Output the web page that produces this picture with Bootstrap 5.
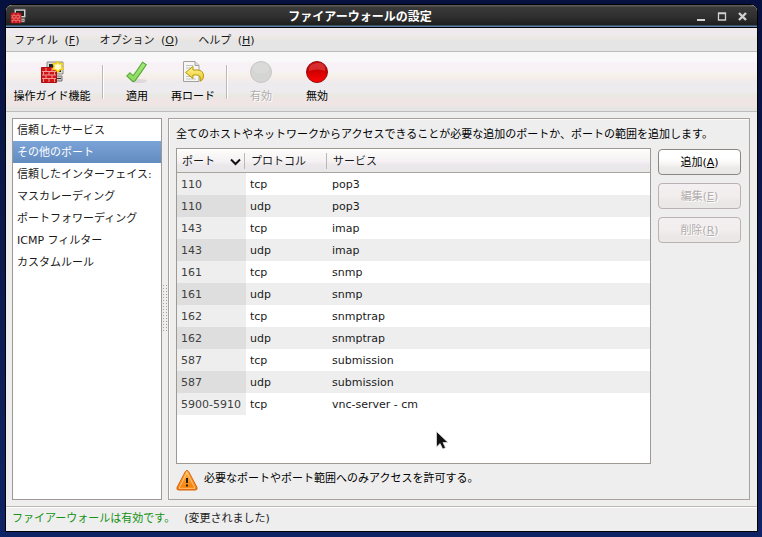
<!DOCTYPE html>
<html lang="ja">
<head>
<meta charset="utf-8">
<meta name="viewport" content="width=device-width, initial-scale=1">
<title>ファイアーウォールの設定</title>
<link href="https://cdn.jsdelivr.net/npm/bootstrap@5.3.0/dist/css/bootstrap.min.css" rel="stylesheet">
<style>
  body {
    --bs-body-font-family: "DejaVu Sans", "Noto Sans CJK JP", sans-serif;
    font-size: 11px; line-height: 16px; color: #1a1a1a;
    padding: 4px 4px 5px 5px;
    background: linear-gradient(#06113f, #0c1a50 50%, #0f2466);
  }
  .fw-window { background: #eee; border: 1px solid #000; border-radius: 7px 7px 0 0; overflow: hidden; }
  .titlebar {
    height: 23px; color: #fff; border-bottom: 1px solid #000;
    background: linear-gradient(#5c5b58 0 1px, #3a3a3a 2px, #2f2f2f 12px, #1d1f1d 20px, #5c82ad 21px);
    padding: 0 8px 0 4px;
  }
  .title-text { font-size: 12px; line-height: 16px; padding-top: 1px; }
  .win-btn { padding: 0; border: 0; background: none; display: flex; }
  .menubar {
    height: 24px; padding: 2px 8px 0; border-bottom: 1px solid #bdb9b9; gap: 20px;
    background: linear-gradient(#eeeaee 0 7px, #ebeae2 9px, #eae5e4 12px, #e5e5e5 14px);
  }
  .menubar a { color: inherit; text-decoration: none; }
  .menubar span { margin: 0 0 0 3px; }
  .toolbar {
    height: 60px; padding: 8px 2px 0; border-bottom: 1px solid #c1bcbc;
    background: linear-gradient(#f9f8f9 0 9px, #f8f2f7 11px 19px, #f5f3ea 22px, #f5ecea 27px, #edebee 31px 40px, #e9e9e2 43px, #eee5e4 47px 53px, #e5e5e5 57px);
  }
  .tool-btn { width: 56px; padding: 0; border: 0; background: none; color: #000; display: flex; flex-direction: column; align-items: center; gap: 5px; white-space: nowrap; }
  .tool-wide { width: 88px; }
  .tool-btn:disabled { color: #b1adad; text-shadow: 1px 1px #fff; }
  .tool-sep { width: 2px; height: 34px; margin: 5px 5px 0; border-left: 1px solid #bdb8b6; border-right: 1px solid #fff; }
  .toolbar .tool-wide + .tool-sep { margin-left: 6px; }
  .workspace { padding: 6px 7px 6px 6px; min-height: 0; }
  .side-list {
    --bs-list-group-border-width: 0;
    width: 150px; background: #fff; border: 1px solid #9f9896; border-radius: 0;
  }
  .side-list .list-group-item { color: #1a1a1a; white-space: nowrap; padding: 4px 4px 2px; }
  .side-list .active { color: #fff; background: linear-gradient(#7ba3d7, #628cc0); }
  .pane-grip { width: 6px; }
  .pane-grip i { width: 5px; height: 48px; background: conic-gradient(from 0deg at 1px 1px, transparent 75%, #a5a2a2 0) 0 0 / 3px 3px; }
  .port-frame { border: 1px solid #aaa09d; box-shadow: inset 1px 1px #fafafa; padding: 8px 8px 8px 7px; gap: 5px; color: #000; min-width: 0; }
  .port-area { min-height: 0; gap: 7px; }
  .port-box { border: 1px solid #9f9994; background: #fff; overflow: hidden; }
  .port-table { --bs-table-bg: transparent; table-layout: fixed; color: #1a1a1a; }
  .port-table > :not(caption) > * > * { padding: 4px 4px 2px; box-shadow: none; border: 0; }
  .port-table .col-port { width: 69px; }
  .port-table .col-proto { width: 82px; }
  .port-table > thead > tr > th {
    height: 24px; padding: 2px 5px 0; font-weight: 400; vertical-align: middle;
    background: linear-gradient(#aaa39f, #aaa39f) bottom / 100% 1px no-repeat, linear-gradient(#bdb7b4, #bdb7b4) right 1px center / 1px 16px no-repeat, linear-gradient(#fff, #faf8f6 5px, #f5f1f5 12px, #ebe8eb 16px, #e7e7e7);
  }
  .port-table > thead > tr > th:last-child { background: linear-gradient(#aaa39f, #aaa39f) bottom / 100% 1px no-repeat, linear-gradient(#fff, #faf8f6 5px, #f5f1f5 12px, #ebe8eb 16px, #e7e7e7); }
  .port-table tbody tr:nth-child(even) { background: #eee; }
  .port-table tbody td:first-child { background: #eee; color: #404040; white-space: nowrap; }
  .port-table tbody tr:nth-child(even) td:first-child { background: #dedede; }
  .action-col { width: 83px; gap: 8px; padding-top: 1px; }
  .gtk-btn {
    --bs-btn-font-size: 11px; --bs-btn-line-height: 16px;
    --bs-btn-color: #000; --bs-btn-border-color: #8c8682; --bs-btn-border-radius: 4px;
    --bs-btn-disabled-color: #b3adad; --bs-btn-disabled-border-color: #bab1b0; --bs-btn-disabled-opacity: 1;
    padding: 5px 0 3px;
    background: linear-gradient(#fff 8px, #faf6f6 13px, #ece9e9 18px, #e9e7e7);
  }
  .gtk-btn:disabled { background: linear-gradient(#f3eff2, #f2eeee 12px, #ebe7e8 18px, #eae7e7); text-shadow: 1px 1px #fff; }
  .port-note { gap: 6px; }
  .port-note div { padding-top: 2px; }
  .statusbar { height: 25px; padding: 0 6px; gap: 9px; border-top: 1px solid #bdb9b2; box-shadow: inset 0 1px #fff; }
  .status-ok { color: #149214; }
  .pointer { left: 436px; top: 431px; pointer-events: none; }
</style>
<script src="https://cdn.jsdelivr.net/npm/bootstrap@5.3.0/dist/js/bootstrap.bundle.min.js"></script>
</head>
<body class="vh-100 d-flex flex-column overflow-hidden">
<svg width="0" height="0" class="position-absolute" aria-hidden="true">
  <defs>
    <symbol id="firewall" viewBox="0 0 24 24">
      <path d="M7 2h16v12H7z" fill="#dcdcd8" stroke="#888"/><path d="M9 4h12v8H9z" fill="#1e2528"/>
      <path d="M16 16h6v5h-6z" fill="#ccc" stroke="#777"/><path d="M17 18.500h4" stroke="#333"/>
      <path d="M1.500 7.500h15v15h-15z" fill="#cf1518" stroke="#b01013"/>
      <path d="M2 11.500h14M2 15h14M2 18.500h14M6 8v3M12 8v3M3.500 12v3M9 12v3M14.500 12v3M6 15v3M12 15v3M3.500 19v3M9 19v3M14.500 19v3" stroke="#f6aaa4" stroke-width=".9"/>
    </symbol>
    <linearGradient id="gold" x2="0" y2="1"><stop stop-color="#fff59a"/><stop offset="1" stop-color="#e8c81c"/></linearGradient>
    <linearGradient id="green" x2="0" y2="1"><stop stop-color="#a4e678"/><stop offset="1" stop-color="#8cdc60"/></linearGradient>
    <linearGradient id="orange" x2="0" y2="1"><stop stop-color="#ffb24a"/><stop offset="1" stop-color="#f57900"/></linearGradient>
    <linearGradient id="red" x2="0" y2="1"><stop stop-color="#c90d0d"/><stop offset=".45" stop-color="#cf0000"/><stop offset="1" stop-color="#ff0505"/></linearGradient>
  </defs>
</svg>

<main class="fw-window flex-grow-1 d-flex flex-column">
  <header class="titlebar d-flex align-items-center flex-shrink-0">
    <svg width="16" height="16" aria-hidden="true"><use href="#firewall"/></svg>
    <h1 class="title-text flex-grow-1 text-center fw-bold m-0">ファイアーウォールの設定</h1>
    <div class="d-flex gap-2">
      <button class="win-btn" aria-label="最小化"><svg width="13" height="13"><path d="M3 10h8" stroke="#d0d0d0" stroke-width="2"/></svg></button>
      <button class="win-btn" aria-label="最大化"><svg width="13" height="13"><path d="M3.500 3h7v7h-7zM3 3.500h8" fill="none" stroke="#d0d0d0" stroke-width="1.300"/></svg></button>
      <button class="win-btn" aria-label="閉じる"><svg width="13" height="13"><path d="M3 3l7 7M10 3l-7 7" stroke="#d0d0d0" stroke-width="2.400"/></svg></button>
    </div>
  </header>

  <nav class="menubar d-flex align-items-center flex-shrink-0">
    <a href="#">ファイル <span>(<u>F</u>)</span></a>
    <a href="#">オプション <span>(<u>O</u>)</span></a>
    <a href="#">ヘルプ <span>(<u>H</u>)</span></a>
  </nav>

  <div class="toolbar d-flex flex-shrink-0 align-items-start" role="toolbar">
    <button class="tool-btn tool-wide">
      <svg width="24" height="24" viewBox="0 0 24 24"><use href="#firewall"/><path d="M17.500 1.500l1.800 2.300 3.200-.3-.9 2.900 1.400 2.700-3.100.5-1.900 2.400-2-2.300-3.100-.4 1.300-2.800-1-2.900 3.100.2z" fill="#fffbd0" stroke="#f0d018" stroke-width="1.600" stroke-linejoin="round"/></svg>
      操作ガイド機能
    </button>
    <div class="tool-sep"></div>
    <button class="tool-btn">
      <svg width="24" height="24" viewBox="0 0 24 24"><ellipse cx="14" cy="21" rx="8" ry="2" fill="#000" opacity=".08"/><path d="M3 14L8.500 19.200Q14.500 11 19.700 3" fill="none" stroke="#5aa83c" stroke-width="5.600" stroke-linejoin="round" stroke-linecap="butt"/><path d="M3.800 14.700L8.500 19Q14.500 11 19.100 3.900" fill="none" stroke="url(#green)" stroke-width="3.400" stroke-linejoin="round"/></svg>
      適用
    </button>
    <button class="tool-btn">
      <svg width="24" height="24" viewBox="0 0 24 24"><path d="M2.500 2q0-.5.500-.5h11l4 4v16h-15.500z" fill="#f6f6f4" stroke="#a2a29d"/><path d="M14 1.500v4h4" fill="#ddd" stroke="#a2a29d"/><path d="M5 5.500h7M5 8h5M5 16.500h4M5 19h10" stroke="#c4c4c0"/><path d="M4.500 12.500l7.500-6v3.500h4q6.500 0 6.500 6 0 3-2.500 5-1 .5-.8-.6.800-5.400-3.700-5.400H12v3.500z" fill="url(#gold)" stroke="#b79606" stroke-linejoin="round"/></svg>
      再ロード
    </button>
    <div class="tool-sep"></div>
    <button class="tool-btn" disabled>
      <svg width="24" height="24" viewBox="0 0 24 24"><circle cx="12" cy="12" r="10.500" fill="#d5d6d3" stroke="#c6c6c4"/><ellipse cx="12" cy="8" rx="8" ry="5.500" fill="#dadbd8"/></svg>
      有効
    </button>
    <button class="tool-btn">
      <svg width="24" height="24" viewBox="0 0 24 24"><circle cx="12" cy="12" r="10.500" fill="url(#red)" stroke="#8d1111"/><path d="M4 11Q3 4 12 3t8 8q-8-3-16 0z" fill="#e86a6a" opacity=".4"/></svg>
      無効
    </button>
  </div>

  <div class="workspace flex-grow-1 d-flex">
    <div class="side-list list-group flex-shrink-0">
      <button class="list-group-item list-group-item-action">信頼したサービス</button>
      <button class="list-group-item list-group-item-action active" aria-current="true">その他のポート</button>
      <button class="list-group-item list-group-item-action">信頼したインターフェイス:</button>
      <button class="list-group-item list-group-item-action">マスカレーディング</button>
      <button class="list-group-item list-group-item-action">ポートフォワーディング</button>
      <button class="list-group-item list-group-item-action">ICMP フィルター</button>
      <button class="list-group-item list-group-item-action">カスタムルール</button>
    </div>
    <div class="pane-grip d-flex align-items-center justify-content-center flex-shrink-0"><i></i></div>
    <section class="port-frame flex-grow-1 d-flex flex-column">
      <div>全てのホストやネットワークからアクセスできることが必要な追加のポートか、ポートの範囲を追加します。</div>
      <div class="port-area d-flex flex-grow-1">
        <div class="port-box flex-grow-1">
          <table class="port-table table mb-0">
            <colgroup><col class="col-port"><col class="col-proto"><col></colgroup>
            <thead>
              <tr>
                <th scope="col"><div class="d-flex align-items-center justify-content-between">ポート<svg width="11" height="8" aria-hidden="true"><path d="M1 1.500l4.500 4.500L10 1.500" fill="none" stroke="#111" stroke-width="2"/></svg></div></th>
                <th scope="col">プロトコル</th>
                <th scope="col">サービス</th>
              </tr>
            </thead>
            <tbody>
              <tr><td>110</td><td>tcp</td><td>pop3</td></tr>
              <tr><td>110</td><td>udp</td><td>pop3</td></tr>
              <tr><td>143</td><td>tcp</td><td>imap</td></tr>
              <tr><td>143</td><td>udp</td><td>imap</td></tr>
              <tr><td>161</td><td>tcp</td><td>snmp</td></tr>
              <tr><td>161</td><td>udp</td><td>snmp</td></tr>
              <tr><td>162</td><td>tcp</td><td>snmptrap</td></tr>
              <tr><td>162</td><td>udp</td><td>snmptrap</td></tr>
              <tr><td>587</td><td>tcp</td><td>submission</td></tr>
              <tr><td>587</td><td>udp</td><td>submission</td></tr>
              <tr><td>5900-5910</td><td>tcp</td><td>vnc-server - cm</td></tr>
            </tbody>
          </table>
        </div>
        <div class="action-col d-flex flex-column flex-shrink-0">
          <button class="btn gtk-btn">追加(<u>A</u>)</button>
          <button class="btn gtk-btn" disabled>編集(<u>E</u>)</button>
          <button class="btn gtk-btn" disabled>削除(<u>R</u>)</button>
        </div>
      </div>
      <div class="port-note d-flex align-items-start">
        <svg width="22" height="22" viewBox="0 0 22 22" aria-hidden="true"><path d="M11 1.500q1 0 1.600 1L21 18.500q.6 2.500-1.500 2.500h-17q-2.100 0-1.500-2.500L9.400 2.500q.6-1 1.600-1z" fill="url(#orange)" stroke="#d9620a"/><path d="M11 3.500L3 19.300h16z" fill="none" stroke="#ffc57d" stroke-linejoin="round"/><path d="M11 9v5M11 15.500v2" stroke="#222" stroke-width="2"/></svg>
        <div>必要なポートやポート範囲へのみアクセスを許可する。</div>
      </div>
    </section>
  </div>

  <footer class="statusbar d-flex align-items-center flex-shrink-0">
    <span class="status-ok">ファイアーウォールは有効です。</span>
    <span>(変更されました)</span>
  </footer>
</main>

<svg class="pointer position-absolute" width="14" height="20" viewBox="0 0 14 20" aria-hidden="true"><path d="M.5.5v15.500l3.600-3.400 2.600 5.400 2.800-1.200-2.500-5.300h5z" fill="#111" stroke="#ddd" stroke-width=".8"/></svg>
</body>
</html>
